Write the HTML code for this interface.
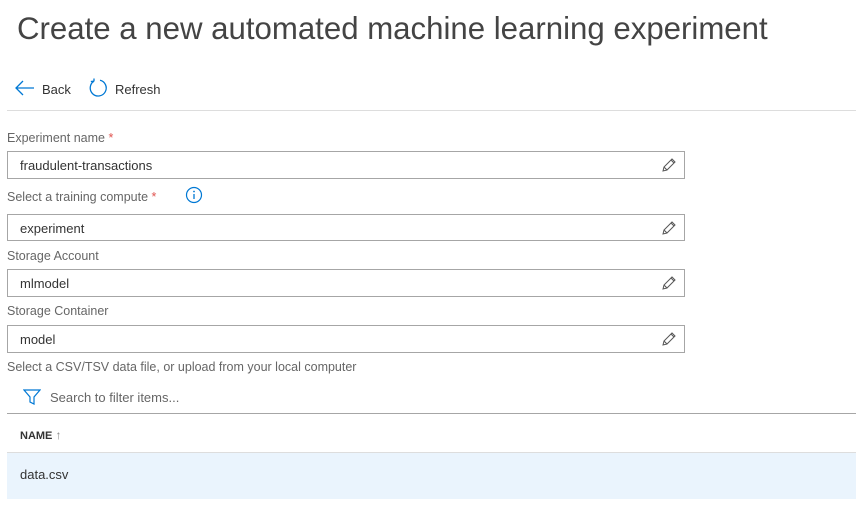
<!DOCTYPE html>
<html><head><style>
body{margin:0;width:856px;height:522px;background:#fff;font-family:"Liberation Sans",sans-serif;color:#333;position:relative;overflow:hidden}
.a{position:absolute}
.t{left:17px;top:11px;font-size:31.2px;font-weight:normal;color:#444;letter-spacing:0}
.lbl{font-size:12.5px;color:#666;left:7px}
.star{color:#e0534f}
.inp{left:7px;width:678px;border:1px solid #a6a6a6;background:#fff;font-size:13px;color:#333;box-sizing:border-box}
.inp span{position:absolute;left:12px;top:6px}
.inp svg{position:absolute;right:8px;top:6px}
</style></head><body>
<div class="a t">Create a new automated machine learning experiment</div>
<svg class="a" style="left:15px;top:80px" width="20" height="16" viewBox="0 0 20 16"><path d="M8 1L1 8l7 7M1 8h18" fill="none" stroke="#0078d4" stroke-width="1.3"/></svg>
<div class="a" style="left:42px;top:82px;font-size:13px">Back</div>
<svg class="a" style="left:88px;top:78px" width="20" height="20" viewBox="0 0 20 20"><path d="M6 3.2A8 8 0 1 0 12 2.2M6 3.2L6 0.5M6 3.2L2.8 3.5" fill="none" stroke="#0078d4" stroke-width="1.3"/></svg>
<div class="a" style="left:115px;top:82px;font-size:13px">Refresh</div>
<div class="a" style="left:7px;top:110px;width:849px;height:1px;background:#ddd"></div>

<div class="a lbl" style="top:131px">Experiment name <span class="star">*</span></div>
<div class="a inp" style="top:151px;height:28px"><span>fraudulent-transactions</span><svg width="14" height="14" viewBox="0 0 14 14"><path d="M1 13l1-4 8-8 3 3-8 8zM2 9l3 3M9 2l3 3" fill="none" stroke="#555" stroke-width="1"/></svg></div>
<div class="a lbl" style="top:190px">Select a training compute <span class="star">*</span></div>
<svg class="a" style="left:185px;top:186px" width="18" height="18" viewBox="0 0 18 18"><circle cx="9" cy="9" r="7.5" fill="none" stroke="#0078d4" stroke-width="1.2"/><path d="M9 8v5" stroke="#0078d4" stroke-width="1.3"/><circle cx="9" cy="5.5" r="0.9" fill="#0078d4"/></svg>
<div class="a inp" style="top:214px;height:27px"><span>experiment</span><svg width="14" height="14" viewBox="0 0 14 14"><path d="M1 13l1-4 8-8 3 3-8 8zM2 9l3 3M9 2l3 3" fill="none" stroke="#555" stroke-width="1"/></svg></div>
<div class="a lbl" style="top:249px">Storage Account</div>
<div class="a inp" style="top:269px;height:28px"><span>mlmodel</span><svg width="14" height="14" viewBox="0 0 14 14"><path d="M1 13l1-4 8-8 3 3-8 8zM2 9l3 3M9 2l3 3" fill="none" stroke="#555" stroke-width="1"/></svg></div>
<div class="a lbl" style="top:304px">Storage Container</div>
<div class="a inp" style="top:325px;height:28px"><span>model</span><svg width="14" height="14" viewBox="0 0 14 14"><path d="M1 13l1-4 8-8 3 3-8 8zM2 9l3 3M9 2l3 3" fill="none" stroke="#555" stroke-width="1"/></svg></div>
<div class="a lbl" style="top:360px">Select a CSV/TSV data file, or upload from your local computer</div>
<svg class="a" style="left:23px;top:388px" width="18" height="18" viewBox="0 0 18 18"><path d="M1 2h16l-6 7v7l-4-2V9z" fill="none" stroke="#0078d4" stroke-width="1.2"/></svg>
<div class="a" style="left:50px;top:390px;font-size:13px;color:#666">Search to filter items...</div>
<div class="a" style="left:7px;top:413px;width:849px;height:1px;background:#a6a6a6"></div>
<div class="a" style="left:20px;top:428px;font-size:11px;font-weight:bold;color:#333">NAME <span style="font-weight:normal;color:#888;font-size:12px">↑</span></div>
<div class="a" style="left:7px;top:452px;width:849px;height:1px;background:#ddd"></div>
<div class="a" style="left:7px;top:453px;width:849px;height:46px;background:#eaf4fd"></div>
<div class="a" style="left:20px;top:467px;font-size:13px">data.csv</div>
</body></html>
